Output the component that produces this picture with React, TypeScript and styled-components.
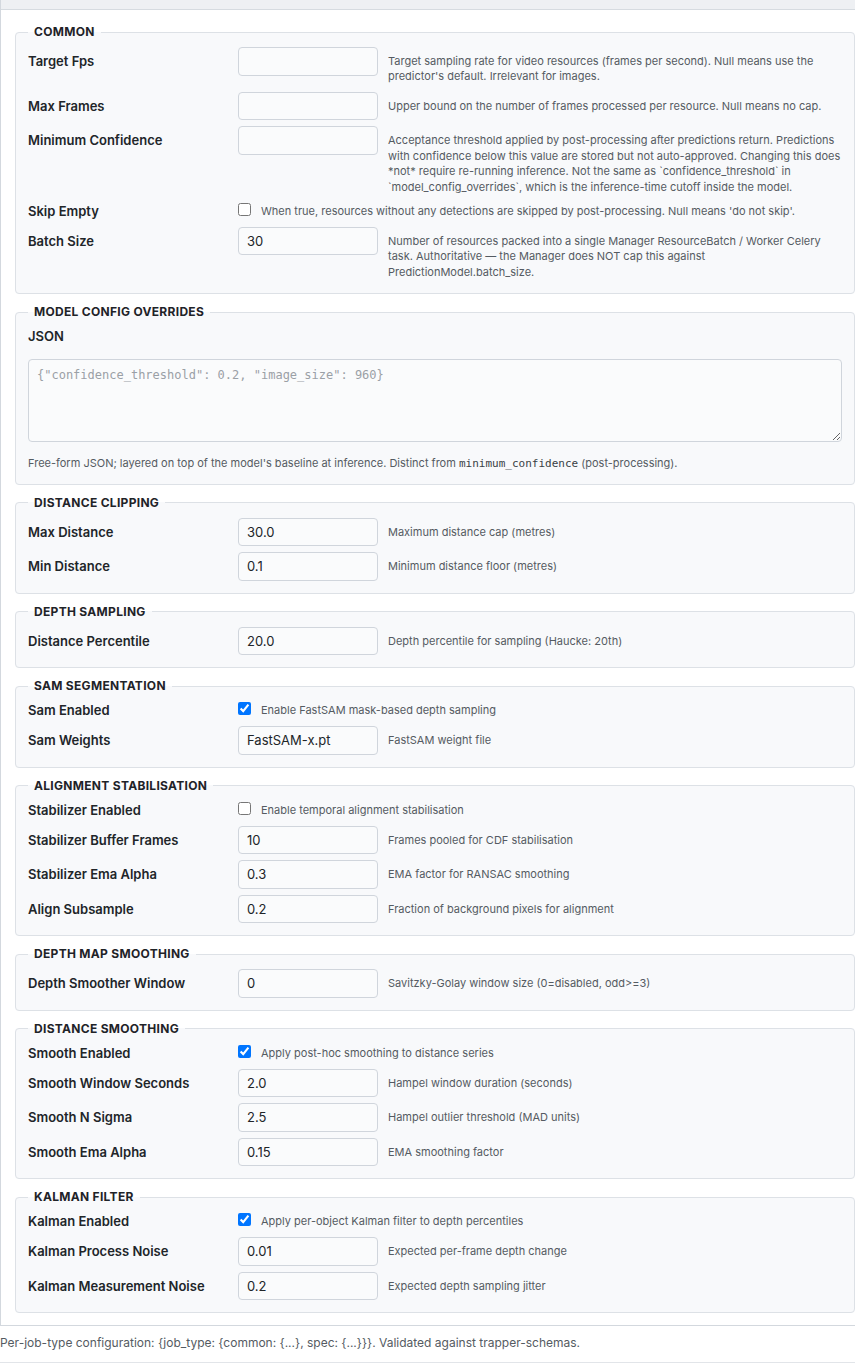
import React from "react";
import styled, { createGlobalStyle } from "styled-components";

const Global = createGlobalStyle`
  html, body { margin: 0; padding: 0; background: #ffffff; }
  body { font-family: Inter, "Noto Sans", "Liberation Sans", sans-serif; color: #212529; }
  * { box-sizing: border-box; }
`;

const Page = styled.div`
  width: 100%;
  overflow: hidden;
`;

const Panel = styled.div`
  width: 870px;
  border: 1px solid #d3d8de;
  border-top: none;
  background: #ffffff;
`;

const PanelHead = styled.div`
  height: 10px;
  background: #eef0f3;
  border-bottom: 1px solid #d6dbe0;
`;

const PanelBody = styled.div`
  padding: 14px 14px 12px 14px;
  display: flex;
  flex-direction: column;
  gap: 10px;
  width: 870px;
`;

const Fieldset = styled.fieldset`
  width: 840px;
  margin: 0;
  padding: 7px 12px 12px 12px;
  background: #f8f9fb;
  border: 1px solid #dde1e6;
  border-radius: 4px;
  min-inline-size: 0;
`;

const Legend = styled.legend`
  padding: 0 6px;
  font-size: 12px;
  line-height: 16px;
  font-weight: 700;
  letter-spacing: 0.3px;
  text-transform: uppercase;
  color: #1f2328;
`;

const Rows = styled.div`
  display: flex;
  flex-direction: column;
  gap: 6px;
`;

const Row = styled.div`
  display: grid;
  grid-template-columns: 200px 140px 1fr;
  column-gap: 10px;
  align-items: start;
`;

const CheckRow = styled.div`
  display: grid;
  grid-template-columns: 210px 1fr;
  align-items: start;
`;

const Label = styled.label<{ $check?: boolean }>`
  font-size: 13px;
  font-weight: 600;
  line-height: 16px;
  color: #212529;
  padding-top: ${(p) => (p.$check ? "1px" : "6px")};
  padding-bottom: ${(p) => (p.$check ? "2px" : "0")};
`;

const Input = styled.input`
  width: 140px;
  height: 28.5px;
  margin: 0;
  padding: 0 8px;
  border: 1px solid #d0d5dc;
  border-radius: 4px;
  background: #fafbfc;
  font-family: Inter, "Noto Sans", "Liberation Sans", sans-serif;
  font-size: 13px;
  color: #212529;
  outline: none;
`;

const Help = styled.div<{ $check?: boolean }>`
  font-size: 11px;
  line-height: ${(p) => (p.$check ? "16px" : "15.4px")};
  color: #555b62;
  padding-top: ${(p) => (p.$check ? "1px" : "7px")};
  padding-bottom: ${(p) => (p.$check ? "0" : "1px")};
`;

const CheckWrap = styled.div`
  display: flex;
  align-items: flex-start;
  gap: 10px;
`;

const Check = styled.input`
  width: 13px;
  height: 13px;
  margin: 1px 0 0 0;
  flex: none;
`;

const BlockLabel = styled.div`
  font-size: 13px;
  font-weight: 600;
  line-height: 16px;
  color: #212529;
  margin-bottom: 15px;
  margin-top: 1px;
`;

const TextArea = styled.textarea`
  display: block;
  width: 100%;
  height: 83px;
  margin: 0;
  padding: 7px 8px;
  border: 1px solid #d0d5dc;
  border-radius: 4px;
  background: #fafbfc;
  font-family: "DejaVu Sans Mono", "Liberation Mono", monospace;
  font-size: 12px;
  line-height: 16px;
  color: #212529;
  outline: none;
  resize: vertical;
  &::placeholder { color: #9aa0a6; }
`;

const BlockHelp = styled.div`
  font-size: 11px;
  line-height: 15.4px;
  color: #555b62;
  margin-top: 14px;
`;

const Code = styled.code`
  font-family: "DejaVu Sans Mono", "Liberation Mono", monospace;
  font-size: 11px;
  color: #3a3f45;
`;

const FootHelp = styled.div`
  margin-top: 9px;
  font-size: 12px;
  line-height: 16px;
  color: #555b62;
`;

const Divider = styled.div`
  margin-top: 11px;
  border-top: 1px solid #e2e5e9;
`;

type Field =
  | { kind: "input"; label: string; value: string; help: string }
  | { kind: "check"; label: string; checked: boolean; help: string };

type Section = { title: string; fields: Field[] };

const inp = (label: string, value: string, help: string): Field => ({ kind: "input", label, value, help });
const chk = (label: string, checked: boolean, help: string): Field => ({ kind: "check", label, checked, help });

const common: Field[] = [
  inp("Target Fps", "", "Target sampling rate for video resources (frames per second). Null means use the predictor's default. Irrelevant for images."),
  inp("Max Frames", "", "Upper bound on the number of frames processed per resource. Null means no cap."),
  inp(
    "Minimum Confidence",
    "",
    "Acceptance threshold applied by post-processing after predictions return. Predictions with confidence below this value are stored but not auto-approved. Changing this does *not* require re-running inference. Not the same as `confidence_threshold` in `model_config_overrides`, which is the inference-time cutoff inside the model."
  ),
  chk("Skip Empty", false, "When true, resources without any detections are skipped by post-processing. Null means 'do not skip'."),
  inp("Batch Size", "30", "Number of resources packed into a single Manager ResourceBatch / Worker Celery task. Authoritative \u2014 the Manager does NOT cap this against PredictionModel.batch_size."),
];

const sections: Section[] = [
  {
    title: "Distance Clipping",
    fields: [
      inp("Max Distance", "30.0", "Maximum distance cap (metres)"),
      inp("Min Distance", "0.1", "Minimum distance floor (metres)"),
    ],
  },
  {
    title: "Depth Sampling",
    fields: [inp("Distance Percentile", "20.0", "Depth percentile for sampling (Haucke: 20th)")],
  },
  {
    title: "SAM Segmentation",
    fields: [
      chk("Sam Enabled", true, "Enable FastSAM mask-based depth sampling"),
      inp("Sam Weights", "FastSAM-x.pt", "FastSAM weight file"),
    ],
  },
  {
    title: "Alignment Stabilisation",
    fields: [
      chk("Stabilizer Enabled", false, "Enable temporal alignment stabilisation"),
      inp("Stabilizer Buffer Frames", "10", "Frames pooled for CDF stabilisation"),
      inp("Stabilizer Ema Alpha", "0.3", "EMA factor for RANSAC smoothing"),
      inp("Align Subsample", "0.2", "Fraction of background pixels for alignment"),
    ],
  },
  {
    title: "Depth Map Smoothing",
    fields: [inp("Depth Smoother Window", "0", "Savitzky-Golay window size (0=disabled, odd>=3)")],
  },
  {
    title: "Distance Smoothing",
    fields: [
      chk("Smooth Enabled", true, "Apply post-hoc smoothing to distance series"),
      inp("Smooth Window Seconds", "2.0", "Hampel window duration (seconds)"),
      inp("Smooth N Sigma", "2.5", "Hampel outlier threshold (MAD units)"),
      inp("Smooth Ema Alpha", "0.15", "EMA smoothing factor"),
    ],
  },
  {
    title: "Kalman Filter",
    fields: [
      chk("Kalman Enabled", true, "Apply per-object Kalman filter to depth percentiles"),
      inp("Kalman Process Noise", "0.01", "Expected per-frame depth change"),
      inp("Kalman Measurement Noise", "0.2", "Expected depth sampling jitter"),
    ],
  },
];

const FieldRow: React.FC<{ field: Field }> = ({ field }) => {
  if (field.kind === "check") {
    return (
      <CheckRow>
        <Label $check>{field.label}</Label>
        <CheckWrap>
          <Check type="checkbox" defaultChecked={field.checked} />
          <Help $check>{field.help}</Help>
        </CheckWrap>
      </CheckRow>
    );
  }
  return (
    <Row>
      <Label>{field.label}</Label>
      <Input type="text" defaultValue={field.value} />
      <Help>{field.help}</Help>
    </Row>
  );
};

const FieldGroup: React.FC<{ section: Section }> = ({ section }) => (
  <Fieldset>
    <Legend>{section.title}</Legend>
    <Rows>
      {section.fields.map((f) => (
        <FieldRow key={f.label} field={f} />
      ))}
    </Rows>
  </Fieldset>
);

export default function App() {
  return (
    <Page>
      <Global />
      <Panel>
        <PanelHead />
        <PanelBody>
          <FieldGroup section={{ title: "Common", fields: common }} />
          <Fieldset>
            <Legend>Model Config Overrides</Legend>
            <BlockLabel>JSON</BlockLabel>
            <TextArea placeholder={'{"confidence_threshold": 0.2, "image_size": 960}'} />
            <BlockHelp>
              Free-form JSON; layered on top of the model's baseline at inference. Distinct from{" "}
              <Code>minimum_confidence</Code> (post-processing).
            </BlockHelp>
          </Fieldset>
          {sections.map((s) => (
            <FieldGroup key={s.title} section={s} />
          ))}
        </PanelBody>
      </Panel>
      <FootHelp>
        Per-job-type configuration: {"{job_type: {common: {...}, spec: {...}}}"}. Validated against trapper-schemas.
      </FootHelp>
      <Divider />
    </Page>
  );
}
